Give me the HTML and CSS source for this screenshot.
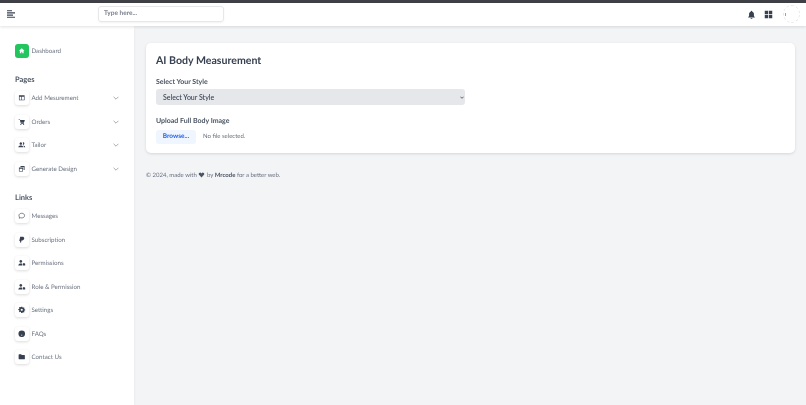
FILE: index.html
```html
<!DOCTYPE html>
<html lang="en">
<head>
<meta charset="utf-8">
<title>AI Body Measurement</title>
<link rel="stylesheet" href="styles.css">
</head>
<body>
<div class="topline"></div>
<header class="header">
  <svg class="burger" viewBox="0 0 8 8"><path d="M0 .7h5M0 2.900h8M0 5.100h6M0 7.300h8" stroke="#374151" stroke-width="1.100" fill="none"/></svg>
  <div class="search">Type here...</div>
  <div class="header-right">
    <svg class="hicon" viewBox="0 0 24 24"><path fill="#374151" d="M12 2a2 2 0 0 0-2 2v.6C7 5.500 5.500 8 5.500 11v5L3 19v1h18v-1l-2.500-3v-5c0-3-1.500-5.500-4.500-6.400V4a2 2 0 0 0-2-2zM9.500 21a2.500 2.500 0 0 0 5 0z"/></svg>
    <svg class="hicon" viewBox="0 0 24 24"><path fill="#374151" d="M2 2h9v9H2zM13 2h9v9h-9zM2 13h9v9H2zM13 13h9v9h-9z"/></svg>
    <div class="avatar"><span class="avatar-dot"></span></div>
  </div>
</header>
<div class="shell">
  <aside class="sidebar">
    <a class="item dash"><span class="tile tile-green"><svg viewBox="0 0 24 24"><path fill="#fff" d="M12 4 3 12h3v8h4.500v-5h3v5H18v-8h3z"/></svg></span><span class="label">Dashboard</span></a>
    <h3 class="section pages">Pages</h3>
    <a class="item"><span class="tile"><svg viewBox="0 0 24 24"><path fill="#374151" d="M3 4h18v16H3zm2 5v9h5V9zm7 0v9h7V9z"/></svg></span><span class="label">Add Mesurement</span><svg class="chev" viewBox="0 0 10 6"><path d="M1 1l4 4 4-4" fill="none" stroke="#6b7280" stroke-width="1"/></svg></a>
    <a class="item"><span class="tile"><svg viewBox="0 0 24 24"><path fill="#374151" d="M2 3h4l1 3h15l-3 9H8L6 5H2zM9 17h10v2H9zM9 19.500a1.800 1.800 0 1 0 .01 0zM18 19.500a1.800 1.800 0 1 0 .01 0z"/></svg></span><span class="label">Orders</span><svg class="chev" viewBox="0 0 10 6"><path d="M1 1l4 4 4-4" fill="none" stroke="#6b7280" stroke-width="1"/></svg></a>
    <a class="item"><span class="tile"><svg viewBox="0 0 24 24"><path fill="#374151" d="M9 4a4 4 0 1 1-.01 0zM16 4a4 4 0 1 1-1 7.800A6 6 0 0 0 15 4.100zM1 20c0-4 4-6 8-6s8 2 8 6zM19 20c0-2.500-1-4.300-2.500-5.700 3.500.3 6.500 2.200 6.500 5.700z"/></svg></span><span class="label">Tailor</span><svg class="chev" viewBox="0 0 10 6"><path d="M1 1l4 4 4-4" fill="none" stroke="#6b7280" stroke-width="1"/></svg></a>
    <a class="item"><span class="tile"><svg viewBox="0 0 24 24"><path fill="#374151" d="M8 3h13v13h-3V6H8zM3 8h13v13H3zm2 4v7h9v-7z"/></svg></span><span class="label">Generate Design</span><svg class="chev" viewBox="0 0 10 6"><path d="M1 1l4 4 4-4" fill="none" stroke="#6b7280" stroke-width="1"/></svg></a>
    <h3 class="section links">Links</h3>
    <a class="item"><span class="tile"><svg viewBox="0 0 24 24"><path fill="none" stroke="#374151" stroke-width="2" d="M12 4c5 0 9 3 9 7.500S17 19 12 19c-1.500 0-2.800-.2-4-.7L4 20l1-4c-1.300-1.300-2-2.800-2-4.500C3 7 7 4 12 4z"/></svg></span><span class="label">Messages</span></a>
    <a class="item"><span class="tile"><svg viewBox="0 0 24 24"><path fill="#374151" d="M7 2h7c4 0 6 2 6 5.500 0 4-3 6.500-7 6.500h-2l-1 7H6l1-5H4z"/></svg></span><span class="label">Subscription</span></a>
    <a class="item"><span class="tile"><svg viewBox="0 0 24 24"><path fill="#374151" d="M9 3a4.500 4.500 0 1 1-.01 0zM1 21c0-5 3.500-7 8-7 1.500 0 2.800.2 4 .7V21zM15 15h8v6h-8zM17 13h4v2h-4z"/></svg></span><span class="label">Permissions</span></a>
    <a class="item"><span class="tile"><svg viewBox="0 0 24 24"><path fill="#374151" d="M9 3a4.500 4.500 0 1 1-.01 0zM1 21c0-5 3.500-7 8-7 1.500 0 2.800.2 4 .7V21zM15 15h8v6h-8zM17 13h4v2h-4z"/></svg></span><span class="label">Role &amp; Permission</span></a>
    <a class="item"><span class="tile"><svg viewBox="0 0 24 24"><path fill="#374151" fill-rule="evenodd" d="M10 3h4l.5 2.500 2 .8 2.200-1.400 2.300 2.300-1.400 2.200.8 2 2.600.5v3.200l-2.600.5-.8 2 1.400 2.200-2.300 2.300-2.200-1.400-2 .8L14 23h-4l-.5-2.500-2-.8-2.200 1.400L3 18.800l1.400-2.200-.8-2L1 14v-3.200l2.600-.5.8-2L3 6.200l2.300-2.300 2.200 1.400 2-.8zM12 9.500a3.500 3.500 0 1 0 .01 0z" transform="translate(0 -1)"/></svg></span><span class="label">Settings</span></a>
    <a class="item"><span class="tile"><svg viewBox="0 0 24 24"><circle cx="12" cy="12" r="10.500" fill="#374151"/><rect x="10.500" y="15" width="3" height="3" fill="#fff"/></svg></span><span class="label">FAQs</span></a>
    <a class="item"><span class="tile"><svg viewBox="0 0 24 24"><path fill="#374151" d="M2 6a2 2 0 0 1 2-2h6l2 2h8a2 2 0 0 1 2 2v10a2 2 0 0 1-2 2H4a2 2 0 0 1-2-2z"/></svg></span><span class="label">Contact Us</span></a>
  </aside>
  <main class="main">
    <section class="card">
      <h1 class="title">AI Body Measurement</h1>
      <label class="field-label" for="style">Select Your Style</label>
      <div class="select-wrap">
        <select class="select" id="style"><option>Select Your Style</option></select>
        <svg class="select-arrow" viewBox="0 0 10 6"><path d="M1 1l4 4 4-4" fill="none" stroke="#374151" stroke-width="2"/></svg>
      </div>
      <div class="field-label upload">Upload Full Body Image</div>
      <div class="file"><span class="browse">Browse...</span><span class="nofile">No file selected.</span></div>
    </section>
    <footer class="footer">© 2024, made with <svg class="heart" viewBox="0 0 24 24"><path fill="#4b5563" d="M12 22 2 11c-2.500-3.500-1-8 3.500-8.500C8 2.200 10.500 3.500 12 6c1.500-2.500 4-3.800 6.500-3.500C23 3 24.500 7.500 22 11z"/></svg> by <b>Mrcode</b> for a better web.</footer>
  </main>
</div>
</body>
</html>
```
FILE: styles.css
```css
* { box-sizing: border-box; }
html, body { margin: 0; height: 100%; overflow: hidden; }
body { font-family: Lato, "Noto Sans", sans-serif; font-size: 6.200px; color: #6b7280; background: #f3f4f6; display: flex; flex-direction: column; filter: blur(.3px); text-rendering: geometricPrecision; }
.topline { height: 3px; background: #3f4147; flex: none; }
.header { height: 23px; flex: none; background: #fff; display: flex; align-items: center; padding: 0 6px 1px 7px; box-shadow: 0 1px 3px rgba(0,0,0,.12); position: relative; z-index: 2; }
.burger { width: 8px; height: 8px; }
.search { width: 126px; height: 16px; margin-left: 83px; border: 1px solid #e5e7eb; border-radius: 3px; padding-left: 5px; font-size: 6.500px; font-weight: 700; line-height: 14px; color: #7b818d; box-shadow: 0 1px 2px rgba(0,0,0,.05); }
.header-right { margin-left: auto; display: flex; align-items: center; gap: 8px; }
.hicon { width: 9px; height: 9px; }
.avatar { width: 17px; height: 18px; margin-left: 2px; border: 1px dashed #e5e7eb; border-radius: 50%; display: flex; align-items: center; padding-left: 1px; }
.avatar-dot { width: 1px; height: 3px; background: #9ca3af; }
.shell { flex: 1; display: flex; min-height: 0; }
.sidebar { width: 134px; flex: none; background: #fff; padding: 18px 15px 0; box-shadow: 0 1px 3px rgba(0,0,0,.06); display: flex; flex-direction: column; }
.item { height: 14px; margin-bottom: 9.500px; display: flex; align-items: center; font-size: 6.200px; color: #6b7280; }
.item.dash { margin-bottom: 0; }
.tile { width: 14px; height: 14px; border-radius: 3px; background: #fff; box-shadow: 0 1px 3px rgba(0,0,0,.14); display: flex; align-items: center; justify-content: center; flex: none; margin-right: 2.500px; }
.tile svg { width: 7.500px; height: 7.500px; }
.tile-green { background: #22c55e; box-shadow: none; }
.label { flex: 1; padding-top: 1px; }
.chev { width: 6px; height: 4px; flex: none; }
.section { margin: 0; font-size: 7.500px; line-height: 9px; font-weight: 700; color: #4b5563; }
.pages { margin-top: 17px; margin-bottom: 7px; }
.links { margin-top: 8px; margin-bottom: 7px; }
.main { flex: 1; padding: 17px 11px 0 12px; min-width: 0; }
.card { background: #fff; height: 110px; border-radius: 5px; padding: 11px 10px 10px; box-shadow: 0 1px 3px rgba(0,0,0,.12); }
.title { margin: 0 0 9.500px; font-size: 10.600px; line-height: 14px; font-weight: 700; color: #374151; }
.field-label { display: block; font-size: 7px; line-height: 9px; font-weight: 700; color: #4b5563; margin-bottom: 2.500px; }
.select-wrap { position: relative; width: 309px; height: 16px; }
.select { display: block; appearance: none; width: 100%; height: 16px; border: 0; border-radius: 3px; background: #e5e7eb; color: #374151; font: 500 7px Lato, sans-serif; padding: 0 7px; }
.select-arrow { position: absolute; right: 1.500px; top: 6.500px; width: 4px; height: 3px; }
.upload { margin-top: 11.500px; margin-bottom: 4px; }
.file { display: flex; align-items: center; height: 14px; margin-top: 3.500px; }
.browse { width: 40px; height: 14px; border-radius: 3px; background: #eff6ff; color: #2563eb; font-size: 6.500px; font-weight: 700; line-height: 14px; text-align: center; }
.nofile { margin-left: 7px; font-size: 6px; color: #6b7280; }
.footer { margin-top: 18px; font-size: 6px; line-height: 9px; color: #6b7280; }
.footer b { font-weight: 700; color: #4b5563; }
.heart { width: 7px; height: 6px; vertical-align: -0.500px; }
```
